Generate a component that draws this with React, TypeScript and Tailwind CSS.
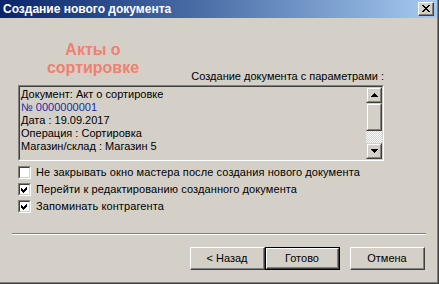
import React from "react"

const font = { fontFamily: '"Liberation Sans", Arial, sans-serif' }

const Check: React.FC<{ checked?: boolean }> = ({ checked }) => {
  return (
    <div className="w-[13px] h-[13px] border-t border-l border-t-[#808080] border-l-[#808080] border-b border-r border-b-white border-r-white">
      <div className="w-full h-full bg-white border-t border-l border-t-[#404040] border-l-[#404040] border-b border-r border-b-[#d4d0c8] border-r-[#d4d0c8]">
        {checked && (
          <svg width="9" height="9" viewBox="0 0 9 9" shapeRendering="crispEdges">
            <path
              d="M1 3h1v1h1v1h1v-1h1v-1h1v-1h1v3h-1v1h-1v1h-1v1h-1v-1h-1v-1h-1z"
              fill="#000"
            />
          </svg>
        )}
      </div>
    </div>
  )
}

const Button: React.FC<{ label: string; isDefault?: boolean }> = ({ label, isDefault }) => {
  const inner = (
    <div className="h-full border-t border-l border-t-white border-l-white border-b border-r border-b-[#404040] border-r-[#404040]">
      <div className="h-full flex items-center justify-center border-b border-r border-b-[#808080] border-r-[#808080] text-[11px] text-black">
        {label}
      </div>
    </div>
  )
  if (isDefault) {
    return <div className="w-[75px] h-[23px] border border-black">{inner}</div>
  }
  return <div className="w-[75px] h-[23px]">{inner}</div>
}

const ScrollBtn: React.FC<{ up?: boolean }> = ({ up }) => (
  <div className="w-[16px] h-[16px] border-t border-l border-t-[#d4d0c8] border-l-[#d4d0c8] border-b border-r border-b-[#404040] border-r-[#404040]">
    <div className="w-full h-full flex items-center justify-center border-t border-l border-t-white border-l-white border-b border-r border-b-[#808080] border-r-[#808080]">
      <svg width="7" height="4" viewBox="0 0 7 4" shapeRendering="crispEdges">
        {up ? (
          <path d="M3 0h1v1h1v1h1v1h1v1h-7v-1h1v-1h1v-1h1z" fill="#000" />
        ) : (
          <path d="M0 0h7v1h-1v1h-1v1h-1v1h-1v-1h-1v-1h-1v-1h-1z" fill="#000" />
        )}
      </svg>
    </div>
  </div>
)

const App: React.FC = () => {
  return (
    <div className="w-[439px] h-[284px] bg-[#404040] overflow-hidden" style={font}>
      <div className="w-[438px] h-[283px] bg-[#808080]">
        <div className="w-[437px] h-[282px] bg-[#d4d0c8] flex flex-col">
          <div className="h-[18px] flex items-center justify-between bg-gradient-to-r from-[#0a246a] to-[#a6caf0] pl-[3px] pr-[3px]">
            <span className="text-white font-bold text-[12px] leading-none">Создание нового документа</span>
            <div className="w-[16px] h-[14px] border-t border-l border-t-white border-l-white border-b border-r border-b-[#404040] border-r-[#404040]">
              <div className="w-full h-full bg-[#d4d0c8] flex items-center justify-center border-b border-r border-b-[#808080] border-r-[#808080]">
                <svg width="8" height="7" viewBox="0 0 8 7" shapeRendering="crispEdges">
                  <path
                    d="M0 0h2v1h1v1h2v-1h1v-1h2v1h-1v1h-1v1h-1v1h1v1h1v1h1v1h-2v-1h-1v-1h-2v1h-1v1h-2v-1h1v-1h1v-1h1v-1h-1v-1h-1v-1h-1z"
                    fill="#000"
                  />
                </svg>
              </div>
            </div>
          </div>

          <div className="ml-[18px] mt-[23px] w-[366px] h-[44px] flex justify-between items-end">
            <div className="self-start w-[150px] text-center text-[16px] leading-[18px] font-bold text-[#f08070]">
              Акты о<br />сортировке
            </div>
            <div className="text-[11px] leading-[13px] mb-[2px] text-black">Создание документа с параметрами :</div>
          </div>

          <div className="ml-[18px] w-[366px] h-[76px] border-t border-l border-t-[#808080] border-l-[#808080] border-b border-r border-b-white border-r-white">
            <div className="w-full h-full flex border-t border-l border-t-[#404040] border-l-[#404040] border-b border-r border-b-[#d4d0c8] border-r-[#d4d0c8]">
              <div className="flex-1 pl-[1px] pt-[1px] text-[11px] leading-[13px] text-black">
                <div>Документ: Акт о сортировке</div>
                <div className="text-[#1a2aa8]">№ 0000000001</div>
                <div>Дата : 19.09.2017</div>
                <div>Операция : Сортировка</div>
                <div>Магазин/склад : Магазин 5</div>
              </div>
              <div className="w-[16px] flex flex-col">
                <ScrollBtn up />
                <div className="h-[28px] border-t border-l border-t-[#d4d0c8] border-l-[#d4d0c8] border-b border-r border-b-[#404040] border-r-[#404040]">
                  <div className="h-full border-t border-l border-t-white border-l-white border-b border-r border-b-[#808080] border-r-[#808080]" />
                </div>
                <div className="h-[12px] bg-[repeating-conic-gradient(#ffffff_0_25%,#d4d0c8_0_50%)] bg-[length:2px_2px]" />
                <ScrollBtn />
              </div>
            </div>
          </div>

          <div className="ml-[18px] mt-[3px] flex flex-col text-[11px] tracking-[0.1px] text-black">
            <div className="h-[17px] flex items-center gap-[5px]">
              <Check />
              <span>Не закрывать окно мастера после создания нового документа</span>
            </div>
            <div className="h-[17px] flex items-center gap-[5px]">
              <Check checked />
              <span>Перейти к редактированию созданного документа</span>
            </div>
            <div className="h-[17px] flex items-center gap-[5px]">
              <Check checked />
              <span>Запоминать контрагента</span>
            </div>
          </div>

          <div className="ml-[12px] mt-[18px] w-[414px] border-t border-t-[#808080] border-b border-b-white" />

          <div className="mt-[12px] ml-[190px] flex">
            <Button label="< Назад" />
            <Button label="Готово" isDefault />
            <div className="w-[10px]" />
            <Button label="Отмена" />
          </div>
        </div>
      </div>
    </div>
  )
}

export default App
